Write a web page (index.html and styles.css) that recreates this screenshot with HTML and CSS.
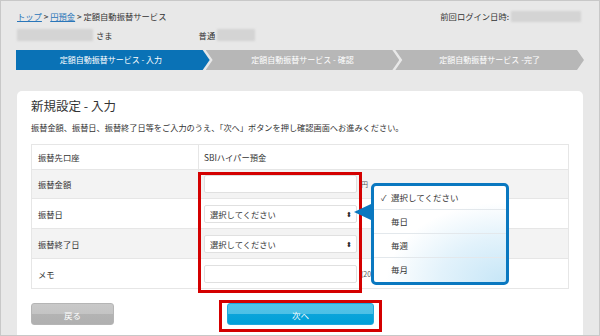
FILE: index.html
```html
<!DOCTYPE html>
<html lang="ja">
<head>
<meta charset="utf-8">
<link rel="stylesheet" href="styles.css">
</head>
<body>
<div class="frame">
  <div class="top">
    <div class="row crumb-row">
      <div class="crumb"><a href="#">トップ</a> &gt; <a href="#">円預金</a> &gt; 定額自動振替サービス</div>
      <div class="login">前回ログイン日時:<span class="blur b-login"></span></div>
    </div>
    <div class="row user-row">
      <span class="blur b-name"></span><span class="sama">さま</span>
      <span class="acct">普通</span><span class="blur b-acct"></span>
    </div>
    <div class="steps">
      <div class="step s1 active">定額自動振替サービス - 入力</div>
      <div class="step s2">定額自動振替サービス - 確認</div>
      <div class="step s3">定額自動振替サービス -完了</div>
    </div>
  </div>
  <div class="card">
    <h1 class="title">新規設定 - 入力</h1>
    <p class="desc">振替金額、振替日、振替終了日等をご入力のうえ、「次へ」ボタンを押し確認画面へお進みください。</p>
    <div class="table">
      <div class="tr r1"><div class="th">振替先口座</div><div class="td">SBIハイパー預金</div></div>
      <div class="tr r2 alt"><div class="th">振替金額</div><div class="td"><div class="input"></div><span class="unit">円</span></div></div>
      <div class="tr r3"><div class="th">振替日</div><div class="td"><div class="input select">選択してください<span class="arrows">⬍</span></div></div></div>
      <div class="tr r4 alt"><div class="th">振替終了日</div><div class="td"><div class="input select">選択してください<span class="arrows">⬍</span></div></div></div>
      <div class="tr r5"><div class="th">メモ</div><div class="td"><div class="input"></div><span class="unit">(20</span></div></div>
    </div>
    <div class="buttons">
      <div class="btn back">戻る</div>
      <div class="btn next">次へ</div>
    </div>
    <div class="redbox rb1"></div>
    <div class="redbox rb2"></div>
    <div class="popup">
      <span class="pointer"></span>
      <div class="item"><span class="check">✓</span>選択してください</div>
      <div class="item">毎日</div>
      <div class="item">毎週</div>
      <div class="item last">毎月</div>
    </div>
  </div>
</div>
</body>
</html>
```
FILE: styles.css
```css
* { box-sizing: border-box; margin: 0; padding: 0; }
html, body { width: 600px; height: 336px; overflow: hidden; }
body {
  font-family: "Noto Sans CJK JP", "Noto Sans", sans-serif;
  color: #333;
  background: #fff;
}
.frame {
  width: 600px;
  height: 336px;
  border: 1px solid #c8c8c8;
  background: #e8e8e8;
  overflow: hidden;
  padding: 0 15px;
}
.top { padding-top: 9px; }
.row { display: flex; align-items: center; font-size: 8.3px; line-height: 12px; }
.crumb-row { justify-content: space-between; padding-left: 1px; padding-right: 3px; }
.crumb a { color: #2a76b9; text-decoration: underline; }
.login { display: flex; align-items: center; }
.blur {
  display: inline-block;
  background: #d4d4d4;
  filter: blur(0.8px);
}
.b-login { width: 70px; height: 11px; margin-left: 2px; }
.user-row { margin-top: 7px; padding-left: 1px; }
.b-name { width: 76px; height: 12px; }
.sama { margin-left: 3px; }
.acct { margin-left: 86px; }
.b-acct { width: 38px; height: 12px; margin-left: 2px; }
.steps { display: flex; margin-top: 9px; height: 20px; }
.step {
  height: 20px;
  line-height: 20px;
  color: #fff;
  font-size: 8px;
  text-align: center;
  background: #b7b7b7;
}
.step.active { background: #0a72b6; }
.s1 { width: 195px; clip-path: polygon(0 0, calc(100% - 7px) 0, 100% 50%, calc(100% - 7px) 100%, 0 100%); padding-right: 4px; }
.s2 { width: 195px; margin-left: -4px; clip-path: polygon(0 0, calc(100% - 7px) 0, 100% 50%, calc(100% - 7px) 100%, 0 100%, 7px 50%); }
.s3 { width: 190px; margin-left: -4px; clip-path: polygon(0 0, calc(100% - 7px) 0, 100% 50%, calc(100% - 7px) 100%, 0 100%, 7px 50%); }
.card {
  position: relative;
  background: #fff;
  margin-top: 21px;
  margin-left: 1px;
  width: 566px;
  height: 260px;
  border-radius: 5px 5px 0 0;
  padding: 6px 14px 0;
}
.title { font-size: 12.5px; font-weight: normal; line-height: 18px; color: #333; }
.desc { font-size: 8.2px; line-height: 14px; margin-top: 5px; }
.table {
  margin-top: 10px;
  width: 538px;
  border: 1px solid #e6e6e6;
  font-size: 8.3px;
}
.tr { display: flex; align-items: center; border-top: 1px solid #e6e6e6; }
.tr:first-child { border-top: none; }
.r1 { height: 24px; }
.r2 { height: 29px; }
.r3, .r4, .r5 { height: 30px; }
.tr.alt { background: #f3f3f3; }
.th { width: 167px; padding-left: 6px; border-right: 1px solid #e6e6e6; height: 100%; display: flex; align-items: center; }
.td { flex: 1; padding-left: 5px; display: flex; align-items: center; height: 100%; }
.input {
  width: 153px;
  height: 18px;
  background: #fff;
  border: 1px solid #e0e0e0;
  border-radius: 2px;
  display: flex;
  align-items: center;
  padding-left: 5px;
  font-size: 8.3px;
}
.select { justify-content: space-between; padding-right: 4px; }
.arrows { font-size: 7px; color: #222; }
.unit { margin-left: 4px; font-size: 7px; color: #555; }
.buttons { display: flex; margin-top: 14px; }
.btn {
  height: 22px;
  line-height: 22px;
  text-align: center;
  color: #fff;
  font-size: 8.5px;
  border-radius: 3px;
}
.back {
  width: 83px;
  background: linear-gradient(#c9c9c9 0, #c4c4c4 50%, #b3b3b3 50%, #b0b0b0 100%);
  border: 1px solid #b5b5b5;
}
.next {
  width: 147px;
  margin-left: 113px;
  background: linear-gradient(#52c3e8 0, #4cc0e6 50%, #0aa4da 50%, #00a0d8 100%);
  border: 1px solid #20a8dc;
}
.redbox { position: absolute; border: 3px solid #d40000; }
.rb1 { left: 181px; top: 81px; width: 164px; height: 121px; }
.rb2 { left: 202px; top: 209px; width: 163px; height: 32px; }
.popup {
  position: absolute;
  left: 354px;
  top: 92px;
  width: 138px;
  height: 102px;
  border: 3px solid #0a78c0;
  border-radius: 5px;
  background: radial-gradient(ellipse 120px 80px at 100% 100%, #c6e6f7 0%, #e2f2fb 55%, #ffffff 100%);
}
.pointer {
  position: absolute;
  left: -20px;
  top: 18px;
  width: 0; height: 0;
  border-top: 8px solid transparent;
  border-bottom: 8px solid transparent;
  border-right: 17px solid #0a78c0;
}
.item {
  height: 24px;
  line-height: 23px;
  border-bottom: 1px solid #e3e8ec;
  padding-left: 17px;
  font-size: 8.5px;
  position: relative;
}
.item.last { border-bottom: none; }
.check { position: absolute; left: 7px; top: 0; font-size: 8px; }
```
